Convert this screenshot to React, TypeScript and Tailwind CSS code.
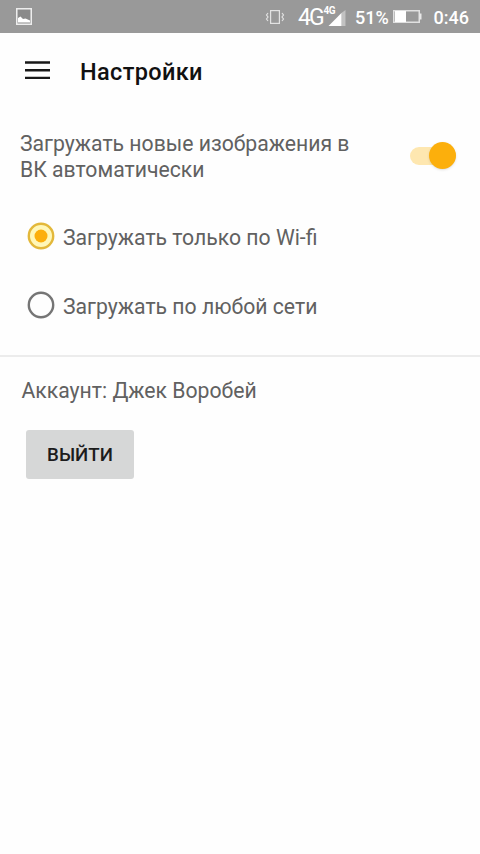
import { useState } from "react";

interface RadioRowProps {
  label: string;
  checked: boolean;
  onSelect: () => void;
}

function StatusBar() {
  return (
    <div className="flex h-[33px] items-center bg-[#999999] pl-4 pr-[11px] text-white">
      <svg width="16" height="17" viewBox="0 0 16 17" fill="none">
        <rect x="1.5" y="1.5" width="13" height="14" fill="#8a8a8a" />
        <rect x="0.75" y="0.75" width="14.5" height="15.5" stroke="#ededed" strokeWidth="1.5" />
        <path d="M2 14.5v-4.5l2.5-1.5 2.5 2.5 2.5-0.5 4.5 2v2z" fill="#fff" />
      </svg>

      <svg className="ml-[233px]" width="20" height="16" viewBox="0 0 20 16" fill="none" stroke="#e2e2e2" strokeWidth="1.2">
        <rect x="5.6" y="1.6" width="8.8" height="12.8" />
        <path d="M3 4l-1.5 2L3 8l-1.5 2L3 12M17 4l1.5 2L17 8l1.5 2L17 12" />
      </svg>

      {/* Mobile network */}
      <div className="ml-[13px] flex w-[50px] pt-[3px]">
        <span className="text-[23px] leading-6 tracking-[-2px]">4G</span>
        <span className="pl-px text-[10px] font-bold leading-[10px] tracking-[-0.5px]">4G</span>
        <svg className="-ml-[7px] mt-[4px] shrink-0" width="18" height="16" viewBox="0 0 18 17">
          <path d="M0 17L14 3v14z" fill="#fff" />
          <path d="M14 3l4-3v17h-4z" fill="#c2c2c2" />
        </svg>
      </div>

      <span className="ml-[7px] w-[35px] whitespace-nowrap pt-[2px] text-lg font-medium leading-6">51%</span>
      <svg className="ml-[3px]" width="29" height="13" viewBox="0 0 29 13" fill="none">
        <rect x="0.75" y="0.75" width="25.5" height="11.5" stroke="#e0e0e0" strokeWidth="1.5" />
        <rect x="2" y="1" width="11" height="11" fill="#fff" />
        <rect x="26.5" y="3.5" width="2" height="6" fill="#e8e8e8" />
      </svg>
      <span className="ml-auto pt-[2px] text-lg font-medium leading-6">0:46</span>
    </div>
  );
}

function RadioRow({ label, checked, onSelect }: RadioRowProps) {
  return (
    <button role="radio" aria-checked={checked} onClick={onSelect} className="flex h-[69px] items-center gap-2 text-left">
      <svg className="-mt-[2px]" width="28" height="28" viewBox="0 0 28 28" fill="none">
        {checked ? (
          <>
            <circle cx="14" cy="14" r="12.6" fill="#fff7b8" />
            <circle cx="14" cy="14" r="12.2" stroke="#e3b83a" strokeWidth="2.4" />
            <circle cx="14" cy="14" r="6.5" fill="#fcaf0c" />
          </>
        ) : (
          <circle cx="14" cy="14" r="12.2" stroke="#757575" strokeWidth="2.4" />
        )}
      </svg>
      <span className="pt-px">{label}</span>
    </button>
  );
}

export default function App() {
  const [auto, setAuto] = useState(true);
  const [network, setNetwork] = useState("wifi");

  return (
    <div className="flex min-h-screen w-full flex-col bg-[#fefefe] font-[Roboto,sans-serif] text-[21.2px] leading-[25px] text-[#616161]">
      <StatusBar />

      {/* Header */}
      <header className="flex h-[77px] items-center gap-[30px] pl-[25px]">
        <svg className="-mt-[3px]" width="25" height="20" viewBox="0 0 25 20" stroke="#181818" strokeWidth="2.4">
          <path d="M0 2.5h25M0 10.2h25M0 17.9h25" />
        </svg>
        <h1 className="pt-px text-[23.5px] font-medium tracking-[0.35px] text-[#111111]">Настройки</h1>
      </header>

      <main>
        <div className="flex h-[92px] items-center justify-between pl-5 pr-6">
          <p className="w-[345px] pt-[2px] leading-[26px]">Загружать новые изображения в ВК автоматически</p>
          <button
            role="switch"
            aria-checked={auto}
            aria-label="Загружать автоматически"
            onClick={() => setAuto(!auto)}
            className={`-mt-px flex h-[18px] w-[46px] items-center rounded-full ${auto ? "justify-end bg-[#fee7b0]" : "bg-gray-300"}`}
          >
            <span className={`size-[27px] rounded-full shadow-sm ${auto ? "bg-[#fcaf0c]" : "bg-gray-100"}`} />
          </button>
        </div>

        <div role="radiogroup" className="flex h-[153px] flex-col pl-[27px]">
          <RadioRow
            label="Загружать только по Wi-fi"
            checked={network === "wifi"}
            onSelect={() => setNetwork("wifi")}
          />
          <RadioRow
            label="Загружать по любой сети"
            checked={network === "any"}
            onSelect={() => setNetwork("any")}
          />
        </div>

        {/* Account */}
        <section className="border-t-2 border-[#ececec] pt-[21px]">
          <p className="pl-[21.5px]">Аккаунт: Джек Воробей</p>
          <button className="ml-[26px] mt-[27px] h-[49px] w-[108px] rounded-[3px] bg-[#d6d7d7] pt-[2px] text-[18.7px] font-medium text-[#1c1c1c]">
            ВЫЙТИ
          </button>
        </section>
      </main>
    </div>
  );
}
